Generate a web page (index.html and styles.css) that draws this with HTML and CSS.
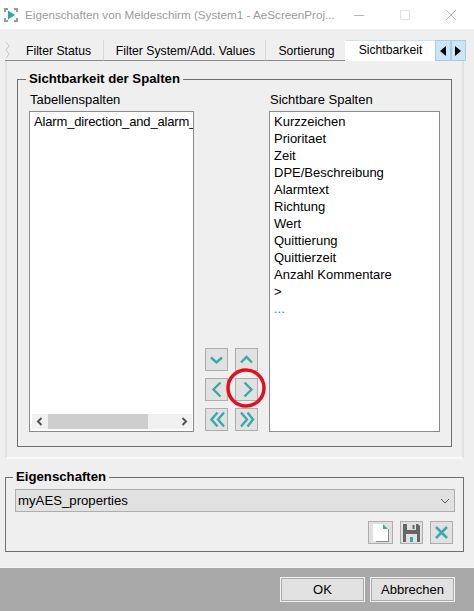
FILE: index.html
```html
<!DOCTYPE html>
<html lang="de">
<head>
<meta charset="utf-8">
<title>Eigenschaften von Meldeschirm</title>
<link rel="stylesheet" href="styles.css">
</head>
<body>
<div class="window">
  <header class="titlebar">
    <svg class="app-icon" width="14" height="14" viewBox="0 0 14 14"><path d="M1 4V1h3M10 1h3v3M13 10v3h-3M4 13H1v-3" fill="none" stroke="#9a9a9a" stroke-width="2"/><path d="M4 2.500L11 7 4 11.500z" fill="#2aa7a7"/></svg>
    <span class="title">Eigenschaften von Meldeschirm (System1 - AeScreenProj...</span>
    <span class="win-btn"><svg width="12" height="12" viewBox="0 0 12 12"><path d="M1 6.500h10" stroke="#b5b5b5"/></svg></span>
    <span class="win-btn"><svg width="12" height="12" viewBox="0 0 12 12"><rect x="1.500" y="1.500" width="9" height="9" fill="none" stroke="#e3e3e3"/></svg></span>
    <span class="win-btn"><svg width="12" height="12" viewBox="0 0 12 12"><path d="M1 1l10 10M11 1L1 11" stroke="#b5b5b5"/></svg></span>
  </header>
  <main class="content">
    <nav class="tabs">
      <span class="tab-edge"><svg width="6" height="18" viewBox="0 0 6 18"><path d="M1 0l3 4-3 4 3 4-3 4" fill="none" stroke="#c8c8c8"/></svg></span>
      <span class="tab tab-status">Filter Status</span>
      <span class="tab tab-system">Filter System/Add. Values</span>
      <span class="tab tab-sort">Sortierung</span>
      <span class="tab tab-active">Sichtbarkeit</span>
      <span class="tab-arrow"><svg width="8" height="12" viewBox="0 0 8 12"><path d="M7 1v10L1 6z" fill="#000"/></svg></span>
      <span class="tab-arrow"><svg width="8" height="12" viewBox="0 0 8 12"><path d="M1 1v10l6-5z" fill="#000"/></svg></span>
    </nav>
    <section class="tab-panel">
      <fieldset class="group group-columns">
        <legend>Sichtbarkeit der Spalten</legend>
        <div class="columns">
          <div class="col col-left">
            <label class="col-label">Tabellenspalten</label>
            <div class="listbox listbox-left">
              <div class="list-items">
                <div class="clip">Alarm_direction_and_alarm_</div>
              </div>
              <div class="hscroll">
                <svg width="16" height="15" viewBox="0 0 16 15"><path d="M9.500 4L6 7.500 9.500 11" fill="none" stroke="#555" stroke-width="2"/></svg>
                <span class="track"><span class="thumb"></span></span>
                <svg width="16" height="15" viewBox="0 0 16 15"><path d="M6.500 4L10 7.500 6.500 11" fill="none" stroke="#555" stroke-width="2"/></svg>
              </div>
            </div>
          </div>
          <div class="move-grid">
            <button class="icon-btn"><svg width="23" height="23" viewBox="0 0 23 23"><path d="M6 9.500l5.500 5 5.500-5" class="teal"/></svg></button>
            <button class="icon-btn"><svg width="23" height="23" viewBox="0 0 23 23"><path d="M6 14.500L11.500 9l5.500 5.500" class="teal"/></svg></button>
            <button class="icon-btn"><svg width="23" height="23" viewBox="0 0 23 23"><path d="M15.500 4.500l-7 7 7 7" class="teal"/></svg></button>
            <button class="icon-btn"><svg width="23" height="23" viewBox="0 0 23 23"><path d="M9.500 4.500l7 7-7 7" class="teal"/></svg></button>
            <button class="icon-btn"><svg width="23" height="23" viewBox="0 0 23 23"><path d="M12.500 4.500l-6 7 6 7M19 4.500l-6 7 6 7" class="teal"/></svg></button>
            <button class="icon-btn"><svg width="23" height="23" viewBox="0 0 23 23"><path d="M6 4.500l6 7-6 7M12.500 4.500l5.500 7-5.500 7" class="teal"/></svg></button>
          </div>
          <div class="col col-right">
            <label class="col-label">Sichtbare Spalten</label>
            <ul class="listbox listbox-right">
              <li>Kurzzeichen</li>
              <li>Prioritaet</li>
              <li>Zeit</li>
              <li>DPE/Beschreibung</li>
              <li>Alarmtext</li>
              <li>Richtung</li>
              <li>Wert</li>
              <li>Quittierung</li>
              <li>Quittierzeit</li>
              <li>Anzahl Kommentare</li>
              <li>&gt;</li>
              <li class="more">...</li>
            </ul>
          </div>
        </div>
      </fieldset>
    </section>
    <fieldset class="group group-props">
      <legend>Eigenschaften</legend>
      <div class="combo">
        <span>myAES_properties</span>
        <svg width="10" height="6" viewBox="0 0 10 6"><path d="M1 1l4 4 4-4" fill="none" stroke="#555"/></svg>
      </div>
      <div class="prop-actions">
        <button class="icon-btn wide"><svg width="16" height="18" viewBox="0 0 16 18"><path d="M0 0h10l5 5v12H0z" fill="#fff"/><path d="M10 0l5 5h-5z" fill="#3aa9a9"/><path d="M15 5h1v13H3v-1h12z" fill="#8a8a8a"/></svg></button>
        <button class="icon-btn"><svg width="17" height="18" viewBox="0 0 17 18"><path d="M0 0h15l2 2v16H0z" fill="#666"/><rect x="4" y="0" width="9" height="6" fill="#e1e1e1"/><rect x="9.500" y="1" width="2" height="4" fill="#666"/><rect x="3" y="10" width="11" height="8" fill="#e1e1e1"/><rect x="7" y="13" width="3" height="5" fill="#3aa9a9"/></svg></button>
        <button class="icon-btn"><svg width="23" height="23" viewBox="0 0 23 23"><path d="M6 6l11 11M17 6L6 17" fill="none" stroke="#3aa9a9" stroke-width="2.500"/></svg></button>
      </div>
    </fieldset>
  </main>
  <footer class="footer">
    <button class="dlg-btn">OK</button>
    <button class="dlg-btn">Abbrechen</button>
  </footer>
  <svg class="annotation" width="46" height="46" viewBox="0 0 46 46"><circle cx="23" cy="23" r="18" fill="none" stroke="#e2101e" stroke-width="3.500"/></svg>
</div>
</body>
</html>
```
FILE: styles.css
```css
* { box-sizing: border-box; }
html, body { margin: 0; padding: 0; }
body {
  width: 474px;
  height: 611px;
  overflow: hidden;
  font-family: "Liberation Sans", Arial, sans-serif;
  font-size: 13px;
  color: #000;
}
.window {
  position: relative;
  width: 474px;
  height: 611px;
  display: flex;
  flex-direction: column;
  background: #efefef;
}
.titlebar {
  height: 29px;
  flex: none;
  background: #fff;
  display: flex;
  align-items: center;
  padding-left: 4px;
}
.app-icon { flex: none; margin-right: 7px; }
.title { flex: 1; min-width: 0; color: #9b9b9b; font-size: 11.7px; white-space: nowrap; }
.win-btn { width: 46px; height: 29px; display: flex; align-items: center; justify-content: center; flex: none; }
.content { flex: 1; padding: 11px 0 0 5px; display: flex; flex-direction: column; }
.tabs { display: flex; height: 21px; width: 461px; align-items: stretch; font-size: 12.2px; }
.tab-edge { width: 7px; border-bottom: 1px solid #8c8c8c; display: flex; align-items: flex-end; }
.tab {
  display: flex;
  align-items: center;
  justify-content: center;
  border-right: 1px solid #d9d9d9;
  border-bottom: 1px solid #8c8c8c;
  padding: 1px 0 0 2px;
}
.tab-status { width: 92px; }
.tab-system { width: 162px; }
.tab-sort { width: 79px; border-right: 0; }
.tab-active {
  width: 90px;
  background: #fff;
  border: 0;
  border-top: 1px solid #cfe2f2;
  padding: 0 0 3px 1px;
}
.tab-arrow {
  width: 15.500px;
  height: 21px;
  background: #cde4f6;
  border: 1px solid #a9cbe4;
  display: flex;
  align-items: center;
  justify-content: center;
}
.tab-panel {
  width: 459px;
  height: 398px;
  border: 2px solid #f9f9f9;
  border-top: 0;
  border-left-color: #e2e2e2;
  border-right-color: #e2e2e2;
  padding: 11px 10px 0 10px;
}
.group { margin: 0; border: 1px solid #6f6f6f; padding: 0; min-width: 0; }
.group legend {
  font-weight: bold;
  font-size: 13.200px;
  padding: 0 3px;
  margin-left: -3px;
  line-height: 14px;
}
.group-columns { height: 375px; padding: 0 11px; }
.columns { display: flex; height: 346px; }
.col { display: flex; flex-direction: column; min-height: 0; }
.col-left { width: 165px; }
.col-right { width: 171px; }
.col-label { height: 25px; line-height: 15px; padding: 6px 0 0 1px; flex: none; }
.listbox { flex: 1; min-height: 0; border: 1px solid #8b8b94; background: #fff; margin: 0; }
.listbox-left { display: flex; flex-direction: column; padding: 1px 0 2px 2px; }
.list-items { flex: 1; padding: 0 0 0 2px; overflow: hidden; line-height: 17px; }
.clip { white-space: nowrap; letter-spacing: -0.150px; }
.hscroll { height: 15px; background: #f0f0f0; display: flex; align-items: center; margin-right: 1px; }
.track { flex: 1; height: 15px; display: block; }
.thumb { display: block; width: 100px; height: 15px; background: #cdcdcd; }
.listbox-right { list-style: none; padding: 1px 0 0 4px; line-height: 17px; }
.more { color: #2a7fc9; }
.move-grid {
  width: 75px;
  display: grid;
  grid-template-columns: 23px 23px;
  grid-auto-rows: 23px;
  column-gap: 7px;
  row-gap: 7px;
  align-content: end;
  justify-content: center;
  padding: 0 0 1px 0;
}
.icon-btn {
  width: 23px;
  height: 23px;
  padding: 0;
  margin: 0;
  background: #e1e1e1;
  border: 1px solid #adadad;
  display: flex;
  align-items: center;
  justify-content: center;
  overflow: visible;
}
.icon-btn svg { flex: none; }
.icon-btn.wide { width: 25px; }
.teal { fill: none; stroke: #3aa9a9; stroke-width: 2.400; }
.group-props {
  width: 459px;
  height: 82px;
  margin-top: 11px;
  padding: 5px 8px 0 9px;
  flex: none;
}
.group-props legend { margin-left: -2px; }
.combo {
  height: 23px;
  background: #e1e1e1;
  border: 1px solid #adadad;
  display: flex;
  align-items: center;
  justify-content: space-between;
  padding: 0 4px 0 2px;
  font-size: 13.200px;
}
.prop-actions { display: flex; justify-content: flex-end; gap: 7px; margin-top: 9px; padding-right: 2px; }
.footer {
  flex: none;
  height: 44px;
  background: #a9a9a9;
  border-top: 1px solid #f4f4f4;
  display: flex;
  justify-content: flex-end;
  gap: 5px;
  padding: 9px 19px 0 0;
}
.dlg-btn {
  width: 85px;
  height: 25px;
  background: #e1e1e1;
  border: 1px solid #f0f0f0;
  outline: 1px solid #adadad;
  outline-offset: -2px;
  font-family: inherit;
  font-size: 13px;
  padding: 0;
  color: #000;
}
.annotation { position: absolute; left: 223px; top: 365px; }
```
